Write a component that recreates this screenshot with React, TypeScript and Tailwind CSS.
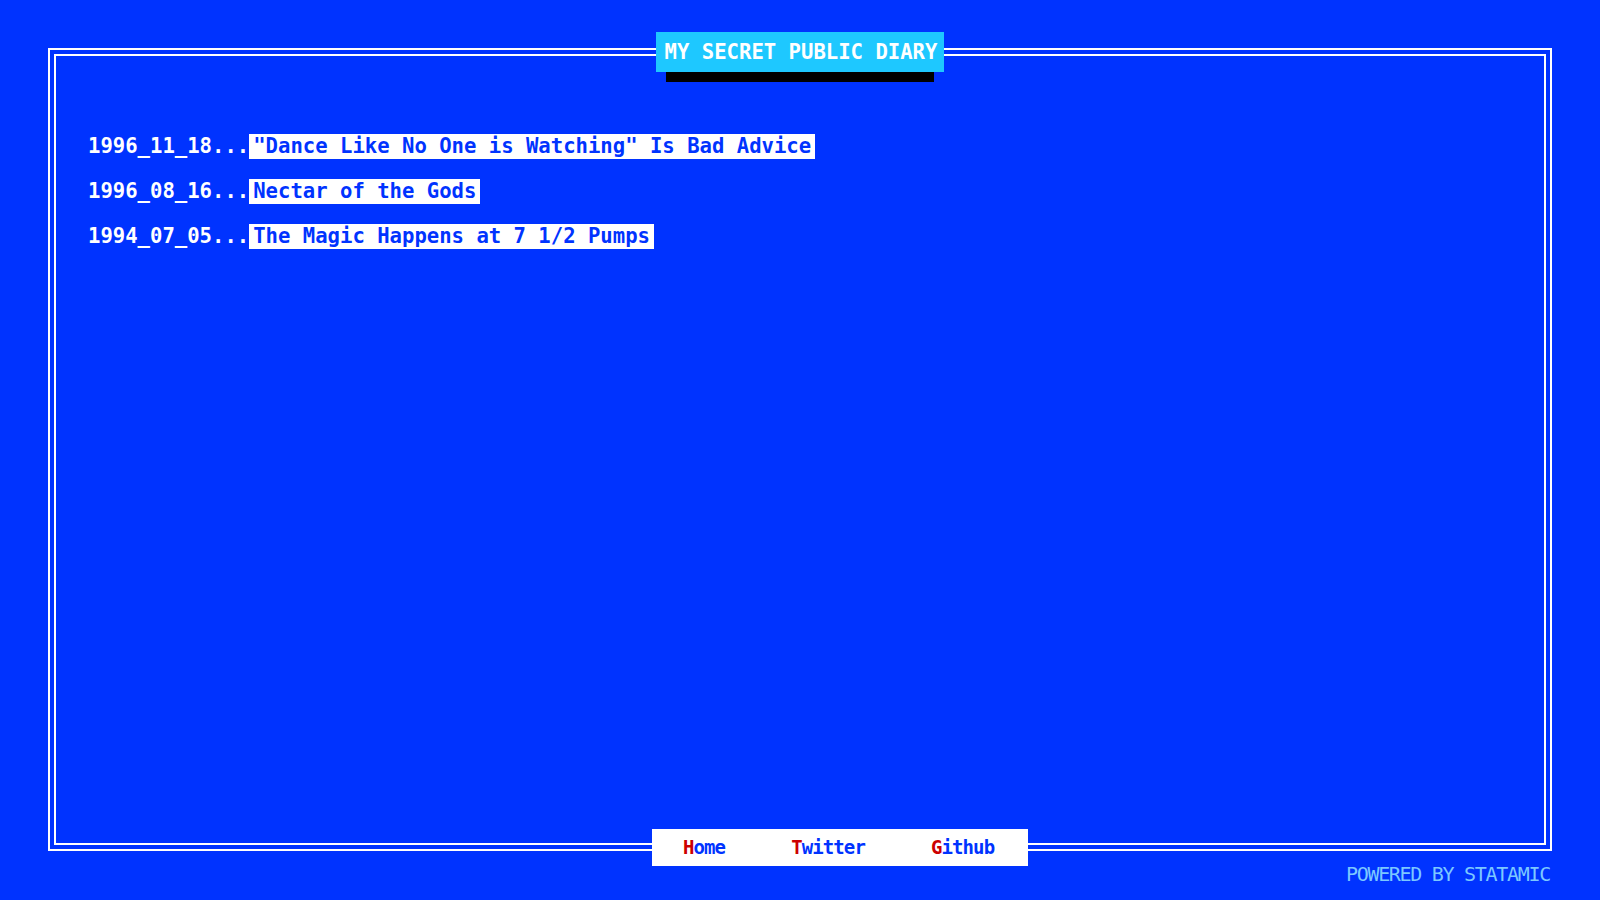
const posts = [
  { date: "1996_11_18", title: "\"Dance Like No One is Watching\" Is Bad Advice" },
  { date: "1996_08_16", title: "Nectar of the Gods" },
  { date: "1994_07_05", title: "The Magic Happens at 7 1/2 Pumps" },
];

const links = ["Home", "Twitter", "Github"];

export default function App() {
  return (
    <div className="h-screen w-full bg-[#0033ff] pt-12 px-12 flex flex-col font-['DejaVu_Sans_Mono',monospace] overflow-hidden">
      <div className="relative flex-1 flex border-2 border-white p-1">
        <div className="flex-1 border-2 border-white pl-8 pt-[78px]">
          <ul className="flex flex-col gap-5">
            {posts.map((post) => (
              <li key={post.date} className="flex items-center h-[25px] text-[20.6px] leading-none font-bold">
                <span className="text-white">{post.date}...</span>
                <a href="#" className="bg-white text-[#0033ff] h-[25px] flex items-center px-1 whitespace-pre">
                  {post.title}
                </a>
              </li>
            ))}
          </ul>
        </div>

        <div className="absolute top-[-18px] left-1/2 -translate-x-1/2 w-[288px] h-10 bg-[#1ec8ff] shadow-[0_20px_0_-10px_#000] flex items-center justify-center">
          <h1 className="text-white text-[20.6px] font-bold leading-none pl-[2px]">MY SECRET PUBLIC DIARY</h1>
        </div>

        <nav className="absolute bottom-[-17px] left-[602px] w-[376px] h-[37px] bg-white flex items-center pl-[31px] gap-[66px] text-[19px] tracking-[-0.9px] font-bold leading-none">
          {links.map((link) => (
            <a key={link} href="#" className="text-[#0033ff]">
              <span className="text-[#cc0000]">{link[0]}</span>
              {link.slice(1)}
            </a>
          ))}
        </nav>
      </div>
      <div className="h-[49px] shrink-0 pt-[11px] text-right text-[20px] tracking-[-1.3px] leading-6 text-[#7cc8ff] pr-[2px]">
        POWERED BY STATAMIC
      </div>
    </div>
  );
}
